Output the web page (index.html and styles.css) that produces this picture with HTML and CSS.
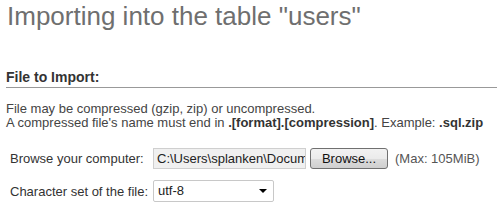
FILE: index.html
```html
<!DOCTYPE html>
<html lang="en">
<head>
  <meta charset="UTF-8" />
  <title>Import</title>
  <link rel="stylesheet" href="styles.css">
</head>
<body>
<div class="page">
  <h1>Importing into the table "users"</h1>

  <div class="section">
    <h3>File to Import:</h3>
    <p class="note">
      File may be compressed (gzip, zip) or uncompressed.<br>
      A compressed file's name must end in <b>.[format].[compression]</b>. Example: <b>.sql.zip</b>
    </p>

    <div class="row">
      <label class="lbl">Browse your computer:</label>
      <span class="file-path">C:\Users\splanken\Docum</span>
      <span class="btn">Browse...</span>
      <span class="max">(Max: 105MiB)</span>
    </div>

    <div class="row">
      <label class="lbl">Character set of the file:</label>
      <span class="select">utf-8<span class="caret"></span></span>
    </div>
  </div>
</div>
</body>
</html>
```

FILE: styles.css
```css
body {
  margin: 0;
  background: #fff;
  font-family: "Liberation Sans", Arial, sans-serif;
  color: #444;
}
.page {
  padding: 0 0 0 6px;
}
h1 {
  margin: 1px 0 0 1px;
  font-size: 26px;
  line-height: 30px;
  font-weight: normal;
  color: #6f6f6f;
}
.section h3 {
  margin: 38px 0 0 0;
  padding-bottom: 1px;
  font-size: 14px;
  line-height: 17px;
  color: #333;
  border-bottom: 1px solid #999;
}
.note {
  margin: 14px 0 0 0;
  font-size: 13px;
  line-height: 14px;
  color: #444;
}
.note b {
  color: #333;
}
.row {
  display: flex;
  align-items: center;
  margin-top: 18px;
  padding-left: 4px;
  font-size: 13px;
}
.row + .row {
  margin-top: 11px;
}
.lbl {
  width: 143px;
  color: #333;
}
.file-path {
  width: 148px;
  height: 19px;
  line-height: 19px;
  padding-left: 3px;
  border: 1px solid #cfcfcf;
  background: #f0f0f0;
  color: #222;
  overflow: hidden;
  white-space: nowrap;
}
.btn {
  margin-left: 4px;
  width: 76px;
  height: 19px;
  line-height: 19px;
  text-align: center;
  border: 1px solid #707070;
  border-radius: 3px;
  background: linear-gradient(#f2f2f2, #ebebeb 50%, #dddddd 50%, #cfcfcf);
  color: #111;
}
.max {
  margin-left: 7px;
  color: #555;
}
.select {
  position: relative;
  width: 115px;
  height: 20px;
  line-height: 20px;
  padding-left: 4px;
  border: 1px solid #c8c8c8;
  border-radius: 2px;
  background: #fff;
  color: #222;
}
.caret {
  position: absolute;
  right: 6px;
  top: 8px;
  border-left: 4px solid transparent;
  border-right: 4px solid transparent;
  border-top: 4px solid #000;
}
```
